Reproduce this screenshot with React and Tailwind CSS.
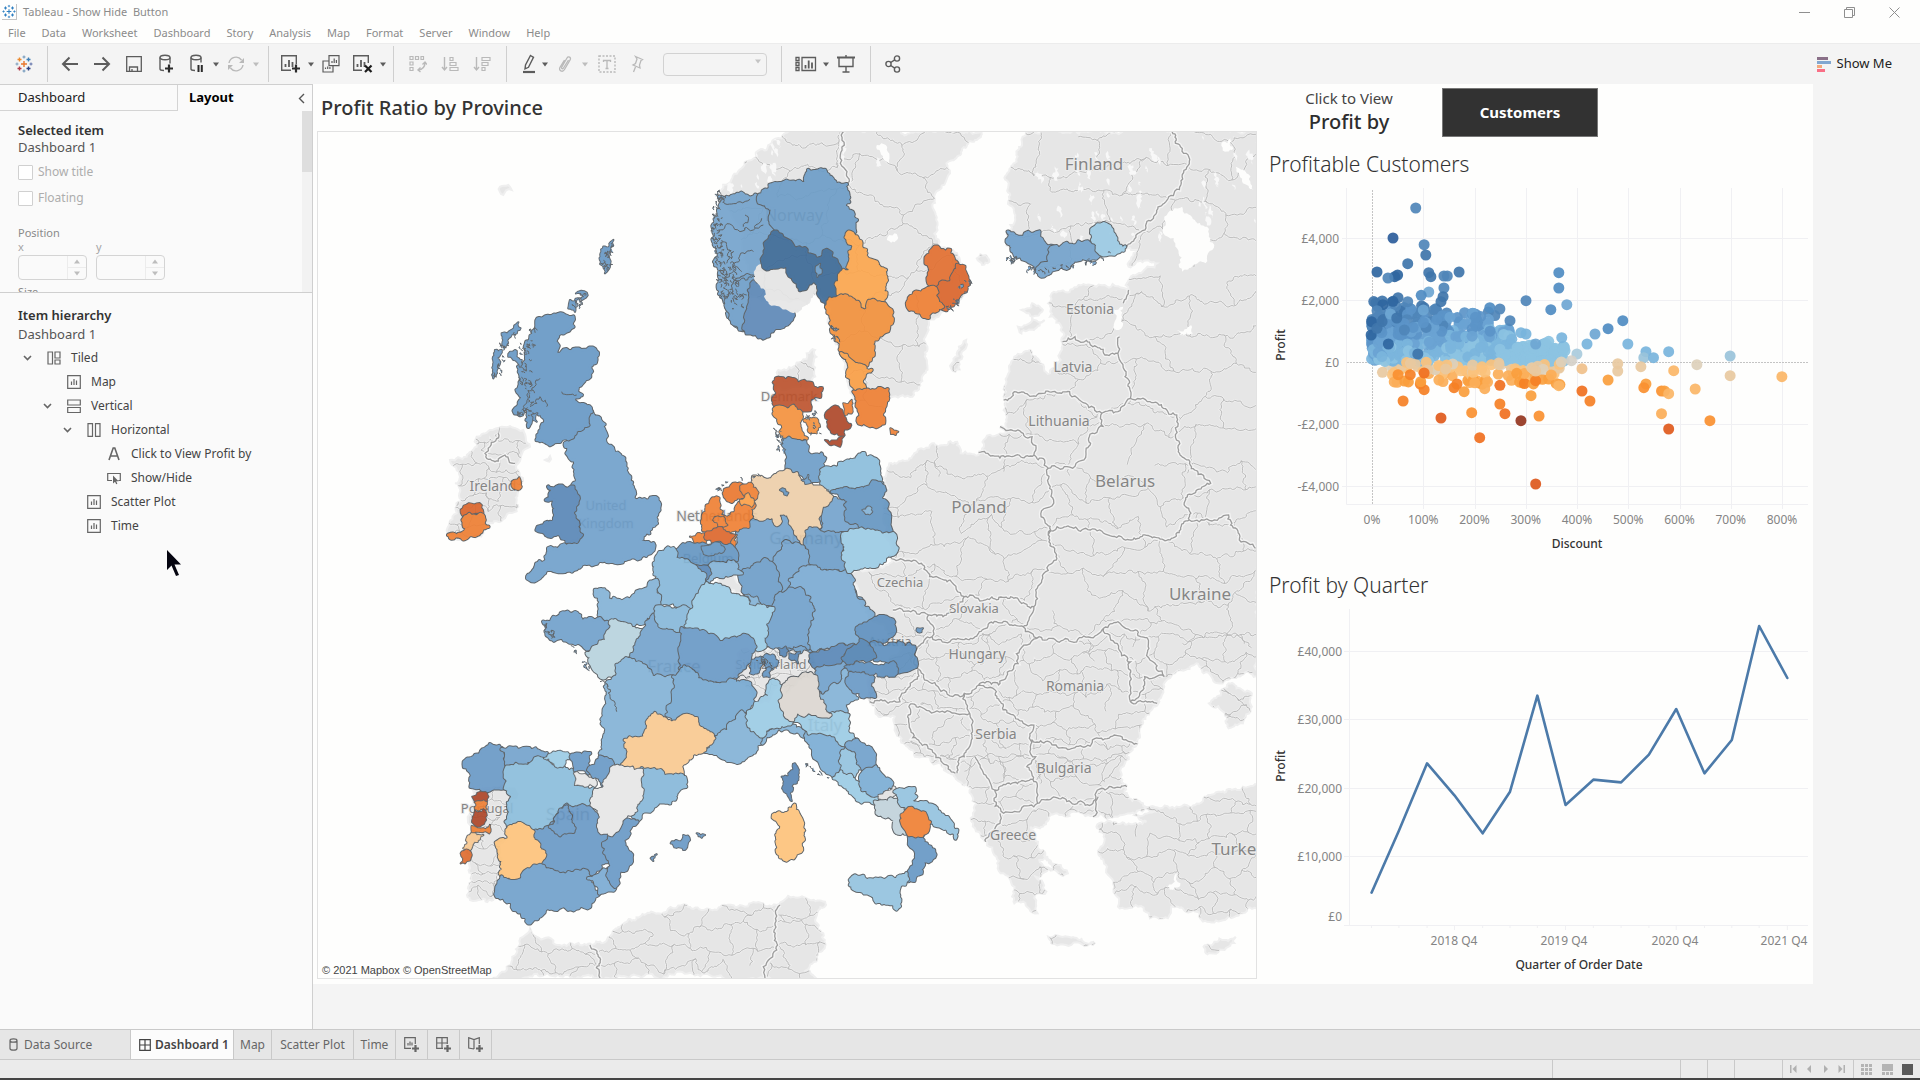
import React from "react";

/* ---------- geometry helpers ---------- */

const SHEETS = {
  nw: [440, 130, 3, 3],
  ne: [700, 130, 2.8, 3],
  sw: [440, 540, 3, 3],
  se: [700, 540, 2.8, 3],
  scatter: [1260, 80, 2.376, 3],
  line: [1260, 560, 2.376, 3],
};

const place = (sheet, x, y) => {
  const [ox, oy, sx, sy] = SHEETS[sheet];
  return [ox + x / sx, oy + y / sy];
};

const parse = (sheet, text) =>
  text
    .trim()
    .split(/\s+/)
    .map((pair) => {
      const [x, y] = pair.split(",").map(Number);
      return place(sheet, x, y);
    });

const hash = (x, y) => {
  const v = Math.sin(x * 12.9898 + y * 78.233) * 43758.5453;
  return v - Math.floor(v);
};

// Midpoint displacement; neighbours that share an edge get the same wiggle.
const wiggle = (a, b, rough, out) => {
  const dx = b[0] - a[0];
  const dy = b[1] - a[1];
  const len = Math.hypot(dx, dy);
  if (len < 3.2) {
    out.push(b);
    return;
  }
  const flip = a[0] > b[0] || (a[0] === b[0] && a[1] > b[1]) ? -1 : 1;
  const mx = (a[0] + b[0]) / 2;
  const my = (a[1] + b[1]) / 2;
  const amp = Math.min(len * rough, 3) * (hash(Math.round(mx * 10), Math.round(my * 10)) - 0.5) * 2 * flip;
  const m = [mx - (dy / len) * amp, my + (dx / len) * amp];
  wiggle(a, m, rough, out);
  wiggle(m, b, rough, out);
};

const trace = (points, closed, rough = 0.3) => {
  const out = [points[0]];
  for (let i = 1; i < points.length; i++) wiggle(points[i - 1], points[i], rough, out);
  if (closed) wiggle(points[points.length - 1], points[0], rough, out);
  return "M" + out.map((p) => p[0].toFixed(1) + " " + p[1].toFixed(1)).join("L") + (closed ? "Z" : "");
};

const random = (seed) => {
  let s = seed;
  return () => {
    s = (s * 1664525 + 1013904223) % 4294967296;
    return s / 4294967296;
  };
};

/* ---------- map data ---------- */

const LAND = [
  ["ne", "250,3 200,40 150,85 110,120 80,160 60,180 55,200 120,300 130,500 300,520 330,490 355,520 360,560 400,690 430,800 440,880 515,880 520,820 540,800 595,800 615,760 635,690 640,600 640,570 690,540 735,500 750,440 720,370 670,350 665,300 655,240 670,180 700,130 690,100 720,80 770,30 790,3"],
  ["ne", "920,3 890,60 860,130 865,200 880,250 870,300 860,330 890,380 950,420 1050,395 1190,355 1225,360 1200,410 1280,400 1200,450 1200,480 1080,465 985,490 975,520 980,560 1010,600 1015,640 1010,690 980,730 950,700 925,660 880,680 860,740 850,800 855,880 855,910 800,925 795,950 780,975 730,970 720,935 650,940 600,970 530,1000 515,1060 525,1230 540,1290 450,1320 410,1325 480,1470 560,1550 480,1640 470,1700 480,1720 500,1760 545,1760 560,1820 620,1880 700,1930 760,1975 775,2020 765,2080 800,2130 830,2180 850,2230 880,2280 880,2320 905,2315 945,2350 945,2290 970,2285 940,2240 990,2220 960,2160 925,2090 960,2090 980,2050 1050,2045 1110,2060 1170,2060 1280,2045 1240,2020 1200,2005 1180,1930 1200,1870 1225,1840 1235,1790 1270,1730 1300,1670 1330,1630 1390,1600 1410,1630 1450,1660 1540,1630 1565,1640 1565,3"],
  ["se", "1110,860 1130,850 1200,850 1250,845 1215,825 1260,800 1370,800 1450,755 1520,740 1565,740 1565,1100 1520,1120 1470,1140 1420,1145 1390,1115 1320,1100 1310,1135 1260,1135 1220,1095 1170,1100 1160,1040 1140,980 1115,940 1130,890"],
  ["se", "1425,490 1480,430 1545,460 1545,500 1520,550 1480,565 1470,520"],
  ["se", "975,1190 1030,1190 1105,1210 1100,1215 1040,1215 980,1200"],
  ["se", "1410,1220 1440,1205 1500,1190 1480,1220 1430,1240"],
  ["se", "950,960 1010,975 1030,1000 980,985"],
  ["sw", "155,1317 200,1280 235,1220 270,1165 290,1190 340,1210 440,1215 480,1205 540,1160 600,1130 680,1115 740,1095 830,1110 900,1095 1010,1095 1060,1070 1110,1080 1155,1085 1125,1140 1150,1180 1155,1220 1130,1250 1100,1290 1130,1317"],
  ["nw", "185,890 250,900 270,950 235,1000 245,1060 235,1130 195,1165 145,1180 130,1210 60,1230 20,1200 50,1150 65,1110 45,1060 60,1040 30,990 80,980 110,950 110,920 150,900"],
  ["nw", "1010,750 1015,720 1060,710 1100,670 1125,660 1120,700 1115,750 1110,770 1005,780"],
  ["sw", "95,745 215,745 230,770 205,800 205,850 195,900 175,910 180,1000 170,1040 160,1080 90,1080 95,1000 75,960 95,870"],
  ["sw", "900,335 1110,315 1135,400 1070,430 1040,460 1010,410 985,485 935,480 930,440 890,420"],
  ["sw", "835,125 860,95 885,100 910,150 890,165 840,140"],
  ["ne", "705,700 725,650 745,630 735,680 715,725"],
  ["ne", "900,540 930,520 960,540 930,560"],
  ["ne", "890,590 930,565 965,570 935,600 900,610"],
  ["ne", "775,385 800,375 810,395 790,405"],
  ["nw", "180,170 205,165 215,180 190,195"],
  ["nw", "315,990 330,978 328,995"],
];

const LAKES = [
  ["ne", "1300,260 1350,230 1420,290 1440,345 1415,400 1350,425 1340,370 1310,320"],
  ["ne", "1155,535 1185,530 1185,580 1165,600"],
  ["ne", "1335,600 1375,585 1380,610 1345,615"],
  ["ne", "1460,40 1485,25 1490,60 1470,65"],
  ["ne", "1500,110 1530,130 1550,180 1520,160"],
  ["ne", "523,330 545,310 552,330 535,338"],
  ["ne", "495,45 520,45 530,100 515,90"],
  ["se", "1310,1040 1335,1000 1345,1030 1325,1050"],
];

const FRONTIERS = [
  ["ne", "1305,3 1345,50 1370,95 1350,140 1300,220 1250,280 1190,350"],
  ["ne", "405,3 398,60 408,120 412,165"],
  ["ne", "1200,480 1185,520"],
  ["ne", "1175,620 1170,670"],
  ["ne", "1015,635 1050,620 1100,650 1130,670 1170,670 1190,740 1205,805"],
  ["ne", "850,810 880,785 960,790 1035,785 1080,820 1125,850 1170,845 1205,805"],
  ["ne", "1205,805 1260,815 1335,855 1340,960 1385,1020 1430,1060 1365,1095 1370,1170"],
  ["ne", "1370,1170 1320,1225 1180,1220 1080,1195 1000,1190 975,1215"],
  ["ne", "1370,1170 1480,1155 1510,1230 1555,1255"],
  ["ne", "1125,850 1130,890 1090,920 1075,990 1020,1010 975,1015"],
  ["ne", "780,967 860,978 935,975 965,990 975,1015 990,1110 955,1160 975,1215 998,1290 940,1380 935,1430"],
  ["ne", "840,890 890,900 930,920 935,975"],
  ["se", "530,45 620,70 640,100 700,120 740,170 800,180 870,170 935,200"],
  ["se", "540,210 640,225 700,210 740,170"],
  ["se", "640,225 650,290 700,305 770,290 830,245 905,260 935,200"],
  ["se", "650,290 610,320 605,385 690,455 740,460 780,435 850,420 895,330 950,290 905,260"],
  ["se", "950,290 1040,305 1130,265 1170,245 1220,270 1255,320 1260,360 1300,410 1245,410 1240,450 1205,485"],
  ["se", "1130,265 1195,350 1205,485 1280,490"],
  ["se", "780,435 830,455 865,520 905,550 935,555 925,600"],
  ["se", "925,600 1000,620 1080,620 1160,585 1225,612"],
  ["se", "740,460 755,520 700,515 585,500 590,570 650,630 715,700"],
  ["se", "755,520 760,600 725,660 720,700"],
  ["se", "925,600 940,650 915,680 935,725 945,790"],
  ["se", "770,650 825,750 860,730 935,725"],
  ["se", "825,750 825,800 850,820 945,790"],
  ["se", "945,790 1020,775 1100,790 1125,745 1195,740"],
  ["se", "1115,770 1100,830"],
  ["se", "840,820 840,850 800,905"],
  ["se", "475,485 560,485 600,420 610,390"],
  ["sw", "450,1215 475,1250 480,1315"],
  ["sw", "1020,1095 1005,1150 1010,1230 970,1280 975,1315"],
  ["nw", "175,910 150,950 135,970 165,995 195,975 225,1000"],
];

const REGIONS = [
  // Norway
  ["nw", "#7ea9cf", "838,200 870,203 958,195 965,220 1000,235 990,270 1010,305 975,340 970,405 940,440 950,460 935,510 915,600 865,560 860,520 845,500 840,420 830,350 825,280 835,240"],
  ["nw", "#77a3ca", "958,195 1005,160 1060,155 1095,160 1105,120 1155,120 1185,155 1220,163 1215,230 1250,270 1245,305 1222,310 1240,350 1235,410 1200,430 1160,360 1125,385 1095,360 1060,350 1010,305 990,270 1000,235 965,220"],
  ["nw", "#77a3ca", "860,520 880,480 905,445 940,440 955,460 930,520 915,600 870,565"],
  ["nw", "#6890bb", "940,455 975,475 985,520 1030,535 1060,550 1030,590 970,625 920,610 918,580 930,510"],
  ["nw", "#e6e6e6", "950,420 1000,400 1040,410 1055,440 1075,480 1110,460 1130,480 1100,520 1060,545 1030,535 990,520 975,475 948,450", "none"],
  ["nw", "#4b759e", "975,340 1010,305 1060,350 1095,355 1125,385 1140,385 1160,360 1195,405 1195,440 1195,520 1180,535 1140,500 1130,460 1105,460 1080,480 1060,440 1040,405 970,405"],
  ["nw", "#77a3ca", "1128,410 1140,402 1145,425 1132,440"],
  // Sweden
  ["ne", "#fbac5b", "412,310 430,315 465,380 520,420 520,500 512,520 470,520 462,550 430,510 390,500 390,435 420,420 430,350"],
  ["ne", "#f2994b", "358,515 390,500 430,510 462,550 470,520 512,520 535,560 520,605 485,630 480,680 450,705 395,670 380,630 365,580"],
  ["ne", "#f9a554", "395,670 450,705 480,720 460,740 465,780 440,785 415,720"],
  ["ne", "#ee8843", "430,785 465,780 500,775 525,778 520,820 515,880 470,885 445,880 440,820"],
  ["ne", "#e37a40", "632,400 665,350 700,360 720,400 705,430 670,470 640,460"],
  ["ne", "#dd713c", "720,405 740,410 748,440 730,490 690,540 665,520 668,470 705,450"],
  ["ne", "#ee8843", "580,520 605,485 660,475 665,520 680,530 640,563 605,545"],
  ["ne", "#ee8843", "533,895 555,905 548,915 535,912"],
  // Finland
  ["ne", "#7aa6ce", "862,305 890,320 950,305 960,335 990,350 975,400 940,415 900,380 880,370 862,340"],
  ["ne", "#7ea9cf", "990,350 1040,345 1060,335 1100,340 1120,355 1120,370 1040,400 950,435 945,415 975,400"],
  ["ne", "#a2cde4", "1100,295 1130,280 1150,295 1160,335 1190,350 1175,365 1115,365 1115,345 1098,330"],
  // Denmark
  ["nw", "#c0603e", "1002,757 1045,745 1115,760 1145,775 1140,800 1110,805 1110,840 1080,845 1060,828 1035,835 1005,835"],
  ["nw", "#f2994b", "1002,838 1035,835 1060,828 1085,860 1080,895 1100,925 1035,928 1025,880"],
  ["nw", "#f2994b", "1090,870 1130,865 1140,890 1130,910 1105,905"],
  ["nw", "#b35439", "1160,850 1185,830 1205,850 1215,870 1230,885 1210,895 1210,915 1170,895 1170,870"],
  ["nw", "#b35439", "1155,930 1210,920 1200,950 1165,940"],
  ["nw", "#ee8843", "1210,820 1235,810 1235,850 1215,855"],
  // Germany
  ["sw", "#7ea9cf", "900,-60 1000,-100 1150,-80 1220,0 1225,95 1235,140 1310,240 1250,280 1255,310 1120,330 970,320 1000,200 930,190 905,100 885,60"],
  ["nw", "#77a3ca", "1030,930 1095,935 1100,965 1155,985 1140,1050 1110,1060 1060,1025 1040,1015 1045,985"],
  ["ne", "#92c0dc", "340,1020 390,1000 460,970 500,1010 510,1060 490,1055 460,1080 410,1075 370,1085 340,1060"],
  ["ne", "#7ea9cf", "345,1110 380,1105 415,1110 410,1160 455,1190 460,1215 410,1225 405,1250 330,1230 350,1180"],
  ["ne", "#6f9cc5", "370,1085 410,1075 460,1080 490,1055 515,1070 510,1110 530,1150 530,1220 470,1235 455,1190 410,1170 415,1110"],
  ["ne", "#8bb6d8", "455,1140 470,1130 482,1145 465,1152"],
  ["nw", "#ecd0ae", "940,1040 1000,1040 1040,1020 1070,1030 1085,1060 1140,1070 1175,1100 1145,1130 1140,1190 1125,1220 1085,1240 1050,1180 1045,1150 1020,1150 1010,1185 985,1160 935,1160 930,1130 950,1080"],
  ["nw", "#6f9cc5", "1020,1080 1035,1078 1045,1088 1040,1096"],
  ["nw", "#77a3ca", "1085,1050 1105,1035 1112,1058"],
  ["sw", "#77a3ca", "1095,10 1110,-35 1210,-20 1215,60 1225,95 1190,85 1130,95 1110,80"],
  ["sw", "#7ea9cf", "1000,70 1030,10 1090,20 1110,80 1050,120 1050,160 1015,165"],
  ["sw", "#77a3ca", "905,100 980,60 995,70 1010,120 1015,190 1000,205 915,160"],
  ["sw", "#83afd4", "1105,320 1105,260 1120,210 1085,145 1050,160 1050,120 1110,80 1190,95 1225,95 1240,150 1310,240 1250,280 1255,310 1120,330"],
  ["sw", "#7aa6ce", "970,320 1000,200 1020,160 1080,145 1120,210 1105,260 1105,325"],
  ["sw", "#a2cde4", "1215,-20 1250,-30 1360,-20 1365,40 1300,80 1225,95 1215,60"],
  // Netherlands
  ["nw", "#ee8843", "815,1110 835,1105 840,1160 860,1170 890,1130 925,1100 940,1120 935,1160 925,1190 880,1200 840,1195 790,1200 790,1190"],
  ["nw", "#e9803f", "855,1080 880,1062 905,1065 910,1100 875,1115 855,1100"],
  ["nw", "#ee8843", "905,1065 935,1060 950,1080 945,1110 905,1085"],
  ["nw", "#f9a554", "900,1110 925,1090 942,1115 935,1130 905,1125"],
  ["nw", "#ee8843", "820,1170 850,1160 862,1185 835,1190"],
  ["nw", "#ee8843", "750,1220 790,1210 795,1250 760,1245"],
  ["nw", "#dd713c", "795,1210 850,1200 885,1215 880,1245 820,1240"],
  ["nw", "#ee8843", "875,1245 890,1215 890,1285 870,1285"],
  // Belgium
  ["sw", "#6f9cc5", "705,40 750,10 870,15 890,60 830,65 740,60 705,55"],
  ["sw", "#6f9cc5", "785,20 840,10 850,35 800,45"],
  ["sw", "#8bb6d8", "830,70 880,65 905,100 840,110 800,125 805,85"],
  ["sw", "#648fba", "740,70 800,80 810,100 790,125 790,95"],
  // France
  ["sw", "#8fbcda", "650,50 700,25 705,55 745,65 790,100 795,140 765,180 745,220 730,195 660,195 655,130"],
  ["sw", "#8bb6d8", "465,150 500,155 505,180 570,180 590,155 650,120 658,195 610,250 570,260 510,250 480,230 480,190"],
  ["sw", "#7aa6ce", "310,245 400,220 430,245 480,235 510,250 500,300 440,328 320,285"],
  ["sw", "#bcd4de", "510,250 570,255 608,275 600,310 570,355 530,375 530,410 490,415 455,375 440,340 480,305 500,300"],
  ["sw", "#7ea9cf", "608,275 640,225 670,265 725,275 725,390 700,410 635,410 605,375 570,355 590,310"],
  ["sw", "#8fbcda", "650,200 735,200 750,230 745,262 710,272 670,262 648,225"],
  ["sw", "#a2cde4", "765,180 800,130 840,135 880,165 930,190 1000,205 985,240 970,325 940,320 900,290 850,315 825,290 745,270 750,220"],
  ["sw", "#8bb6d8", "915,165 950,170 960,190 930,192"],
  ["sw", "#749fc8", "725,265 825,290 850,315 905,290 940,310 930,350 890,410 865,425 780,430 760,395 720,385"],
  ["sw", "#8bb6d8", "530,375 570,358 605,375 635,410 700,412 700,480 680,525 640,520 615,590 555,600 560,640 550,685 480,640 495,560 500,470 500,430 530,410"],
  ["sw", "#7fadd2", "700,410 725,388 760,395 785,430 865,425 890,425 930,430 945,490 900,520 865,560 860,580 790,570 770,535 710,545 680,525 700,480"],
  ["sw", "#8bb6d8", "860,575 870,550 905,515 935,525 935,570 970,590 965,610 905,660 850,655 795,635 820,600"],
  ["sw", "#f7cb98", "555,600 615,590 645,520 680,545 710,545 740,525 770,535 790,570 822,595 795,630 755,645 730,670 730,712 700,712 605,685 550,688 565,640"],
  ["sw", "#648fba", "1025,710 1060,690 1065,670 1072,680 1075,720 1055,783 1030,750"],
  // Spain
  ["sw", "#749fc8", "72,665 120,645 150,613 185,625 200,680 195,745 150,750 92,740 85,690"],
  ["sw", "#7ea9cf", "185,628 250,625 320,640 310,655 200,678"],
  ["sw", "#92c0dc", "200,680 310,658 355,680 395,690 402,735 460,745 455,800 405,795 340,835 325,865 280,875 235,850 205,860 205,800 230,770 195,745"],
  ["sw", "#a2cde4", "312,655 340,635 395,645 360,680"],
  ["sw", "#749fc8", "395,645 450,640 445,700 405,690"],
  ["sw", "#e6e6e6", "402,700 465,710 465,740 405,735"],
  ["sw", "#749fc8", "445,690 480,650 522,680 495,740 460,710"],
  ["sw", "#8fbcda", "605,685 700,712 735,712 738,740 690,790 640,800 595,840 580,830 585,780 600,740"],
  ["sw", "#749fc8", "280,875 330,860 380,795 455,800 480,830 480,855 515,885 495,910 510,960 440,1000 435,990 340,995 300,975 310,935 290,900"],
  ["sw", "#749fc8", "330,860 380,800 400,875 360,885"],
  ["sw", "#fbc684", "168,908 195,905 200,870 235,850 280,875 290,905 312,935 300,970 270,990 240,1020 180,1000 190,960"],
  ["sw", "#7aa6ce", "170,1040 185,1010 240,1020 270,990 300,975 340,995 430,990 445,1020 478,1060 450,1100 335,1105 265,1150 230,1110 215,1085 170,1070"],
  ["sw", "#83afd4", "445,1015 510,985 500,1000 525,1045 478,1060"],
  ["sw", "#749fc8", "515,885 555,835 592,845 552,920 575,965 540,990 525,1040 505,1000 510,960 490,910"],
  ["sw", "#e6e6e6", "495,740 522,680 605,690 600,740 580,820 550,835 515,885 475,860 480,820 455,795 465,750"],
  ["sw", "#749fc8", "692,910 730,885 750,900 730,930"],
  ["sw", "#749fc8", "770,880 795,885 785,893"],
  ["sw", "#749fc8", "632,955 650,943 640,963"],
  // Portugal
  ["sw", "#b35439", "97,770 130,757 145,770 140,785 105,785"],
  ["sw", "#ee8843", "105,787 140,787 140,808 105,808"],
  ["sw", "#b35439", "105,812 130,808 125,855 100,850"],
  ["sw", "#ee8843", "95,858 130,865 150,855 148,880 95,880"],
  ["sw", "#f7cb98", "90,885 130,885 80,930 70,925"],
  ["sw", "#e0763f", "62,940 85,930 95,945 75,970 62,970"],
  // Great Britain
  ["nw", "#7aa6ce", "455,845 480,870 495,935 540,975 570,1040 585,1110 640,1102 658,1140 650,1180 600,1235 640,1240 635,1265 600,1285 500,1295 450,1300 375,1325 320,1320 290,1350 262,1345 320,1290 325,1255 380,1250 410,1235 425,1215 405,1140 415,1100 400,1070 405,990 380,970 375,940 400,920 445,885"],
  ["nw", "#719ec7", "298,565 400,560 400,590 350,640 345,670 400,658 465,658 468,680 450,740 410,785 425,795 400,815 440,830 455,845 445,885 400,915 360,935 330,945 290,930 315,880 305,850 280,840 265,890 260,870 270,830 240,855 225,850 250,800 230,780 255,750 240,730 235,710 260,690 255,650 285,600"],
  ["nw", "#648fba", "325,1070 345,1075 400,1070 415,1100 405,1140 410,1190 425,1215 410,1235 380,1235 340,1215 290,1200 345,1160 345,1110 318,1110 335,1085"],
  ["nw", "#719ec7", "520,330 510,360 500,425 495,430 480,390 490,350"],
  ["nw", "#719ec7", "390,510 415,505 405,545 385,535"],
  ["nw", "#719ec7", "185,610 235,577 230,610 195,650 190,630"],
  ["nw", "#719ec7", "165,660 185,660 175,710 160,745"],
  ["nw", "#719ec7", "205,680 225,660 245,690 240,710"],
  ["nw", "#719ec7", "275,855 292,850 290,875 280,870"],
  ["nw", "#719ec7", "408,490 430,500 425,510 440,488"],
  // Ireland
  ["nw", "#dd713c", "68,1135 125,1125 128,1155 70,1160"],
  ["nw", "#ee8843", "75,1160 128,1155 145,1190 70,1228 40,1225 25,1215 75,1205"],
  ["nw", "#ee8843", "222,1050 238,1042 240,1078 220,1075"],
  // Italy
  ["se", "#8bb6d8", "180,585 240,550 300,575 300,595 240,565 200,580 175,610"],
  ["se", "#a2cde4", "205,420 230,450 225,500 260,540 240,555 180,585 145,570 135,515 155,490 195,470 190,445"],
  ["se", "#7aa6ce", "325,380 400,365 420,390 400,405 390,435 350,465 330,450"],
  ["se", "#8bb6d8", "330,465 350,465 390,435 400,395 425,395 415,440 440,475 405,490 415,525 365,522 330,490"],
  ["se", "#749fc8", "420,400 480,405 475,440 490,470 430,455 415,435"],
  ["se", "#83b1d5", "300,575 370,585 405,615 400,650 395,695 375,712 340,680 310,620"],
  ["se", "#a2cde4", "260,540 275,515 415,525 412,570 440,600 405,615 365,580 305,580"],
  ["se", "#dcd8d2", "230,450 255,415 310,400 325,410 330,460 365,525 275,515 260,540 228,500 235,470"],
  ["se", "#9ac6e0", "410,625 440,650 450,685 420,710 395,695"],
  ["se", "#7aa6ce", "440,600 478,625 492,680 455,685 440,650 410,615"],
  ["se", "#a2cde4", "395,695 425,710 455,730 460,760 495,765 488,790 440,780 375,715"],
  ["se", "#83b1d5", "455,700 492,680 535,740 500,765 455,750"],
  ["se", "#e2e2e2", "500,765 540,740 550,755 535,780 500,775"],
  ["se", "#c3d3db", "490,785 550,780 575,830 580,880 545,870 545,840 495,820"],
  ["se", "#9ac6e0", "545,755 600,745 605,770 590,775 680,825 720,870 715,895 690,865 640,850 605,815 560,790"],
  ["se", "#719ec7", "585,887 625,880 625,910 655,930 650,955 625,965 620,1000 600,1022 578,1022 600,970 605,950"],
  ["se", "#ee8843", "565,825 585,805 635,835 640,860 610,885 585,885"],
  ["se", "#9ac6e0", "420,1020 440,1010 500,1018 578,1000 555,1060 560,1085 550,1108 510,1090 460,1060 420,1035"],
  ["se", "#fbc684", "205,825 240,820 265,795 288,850 282,935 235,958 218,940 225,870"],
  // Austria and Switzerland
  ["se", "#648fba", "310,345 370,325 430,315 400,350 375,370 320,380"],
  ["se", "#6a97c1", "440,280 490,235 540,240 545,265 530,290 500,305 460,310"],
  ["se", "#6a97c1", "480,310 600,320 605,380 550,395 545,370 490,360"],
  ["se", "#5f8bb6", "400,355 440,320 450,300 490,350 470,365 420,370"],
  ["se", "#6a97c1", "405,380 440,365 548,370 548,405 510,410 430,395"],
  ["se", "#719ec7", "608,265 624,265 620,276 610,276"],
  ["se", "#719ec7", "145,360 170,350 180,370 160,400 140,400"],
  ["se", "#719ec7", "175,352 210,350 215,378 185,385"],
  ["se", "#719ec7", "180,395 200,385 195,412 178,410"],
  ["se", "#648fba", "220,325 240,320 242,345 225,345"],
  ["se", "#648fba", "250,340 280,335 275,370 250,355"],
];

const INLETS = [
  ["nw", "835,300 880,290 940,300 970,285"],
  ["nw", "845,440 880,410 900,375 940,365"],
  ["nw", "850,215 900,215 930,208"],
  ["nw", "845,330 870,360 860,400"],
  ["nw", "910,290 925,270 915,255"],
  ["nw", "945,295 965,265"],
  ["nw", "870,400 905,425"],
  ["nw", "890,470 905,445 945,440"],
  ["nw", "880,500 920,495"],
  ["nw", "365,785 410,795"],
  ["nw", "245,840 275,780 300,745"],
  ["nw", "270,830 300,800 320,830"],
  ["sw", "500,430 510,470 530,515"],
  ["sw", "480,425 505,440"],
  ["sw", "890,425 910,405 930,410"],
];

const SKERRIES = [
  ["nw", "840,185 832,240 825,300 832,360 842,430 850,500", 70, 16],
  ["nw", "850,350 860,420 880,480 890,530", 50, 22],
  ["nw", "255,640 260,700 245,750 270,800 240,860", 46, 20],
  ["nw", "280,590 265,650", 12, 12],
  ["nw", "515,335 495,380 498,420", 18, 14],
  ["nw", "430,490 400,530", 12, 12],
  ["nw", "235,590 190,640 175,700 165,740", 16, 10],
  ["ne", "862,375 890,395 940,425 1040,405 1160,370", 34, 12],
  ["ne", "745,440 720,510 690,530", 18, 14],
  ["nw", "1012,900 1022,960", 16, 10],
  ["nw", "820,1085 860,1055 960,1035", 10, 4],
  ["nw", "1110,830 1125,910", 10, 16],
  ["nw", "1180,580 1190,640", 12, 10],
  ["sw", "315,250 330,290", 12, 12],
  ["sw", "385,315 460,400", 8, 6],
  ["sw", "1090,665 1160,715", 8, 14],
  ["se", "150,350 210,380", 14, 16],
];

const LABELS = [
  ["Finland", 1094, 170, 17], ["Estonia", 1090, 314, 14], ["Latvia", 1073, 372, 14],
  ["Lithuania", 1059, 426, 14], ["Belarus", 1125, 487, 17], ["Poland", 979, 513, 17],
  ["Ukraine", 1200, 600, 17], ["Czechia", 900, 587, 13], ["Slovakia", 974, 613, 13],
  ["Hungary", 977, 659, 14], ["Romania", 1075, 691, 14], ["Serbia", 996, 739, 14],
  ["Bulgaria", 1064, 773, 14], ["Greece", 1013, 840, 14], ["Turkey", 1238, 855, 17],
  ["Ireland", 493, 491, 14], ["Norway", 794, 221, 16], ["Denmark", 789, 401, 13],
  ["Netherlands", 717, 521, 14], ["Germany", 806, 544, 17], ["Belgium", 708, 563, 13],
  ["France", 674, 672, 17], ["Switzerland", 771, 669, 13], ["Austria", 890, 646, 13],
  ["Italy", 825, 731, 17], ["Spain", 568, 820, 17], ["Portugal", 487, 813, 13],
  ["United", 606, 510, 13], ["Kingdom", 606, 528, 13],
];

const meshPath = (x0, y0, x1, y1, step) => {
  const node = (i, j) => [
    x0 + i * step + (hash(i + x0, j * 3 + 1) - 0.5) * step * 0.9,
    y0 + j * step + (hash(i * 5 + 2, j + y0) - 0.5) * step * 0.9,
  ];
  let d = "";
  for (let i = 0; x0 + i * step < x1; i++) {
    for (let j = 0; y0 + j * step < y1; j++) {
      if (hash(i * 7 + 3, j * 11) > 0.06) d += trace([node(i, j), node(i + 1, j)], false, 0.28);
      if ((i + j) % 2 === 0) d += trace([node(i, j), node(i, j + 1)], false, 0.28);
    }
  }
  return d;
};

const MESH = [
  meshPath(690, 132, 1256, 470, 34),
  meshPath(880, 470, 1256, 640, 26),
  meshPath(850, 640, 1256, 760, 17),
  meshPath(850, 760, 1256, 960, 19),
  meshPath(460, 890, 850, 980, 19),
  meshPath(445, 425, 525, 545, 14),
  meshPath(465, 785, 520, 905, 15),
  meshPath(740, 640, 830, 700, 12),
].join("");

const landPath = LAND.map(([s, t]) => trace(parse(s, t), true)).join("");
const lakePath = LAKES.map(([s, t]) => trace(parse(s, t), true)).join("");
const frontierPath = FRONTIERS.map(([s, t]) => trace(parse(s, t), false)).join("");
const inletPath = INLETS.map(([s, t]) => trace(parse(s, t), false, 0.4)).join("");

const skerryPath = (() => {
  const rnd = random(41);
  let d = "";
  SKERRIES.forEach(([s, t, count, spread]) => {
    const pts = parse(s, t);
    for (let k = 0; k < count; k++) {
      const f = rnd() * (pts.length - 1);
      const i = Math.floor(f);
      const u = f - i;
      const x = pts[i][0] + (pts[i + 1][0] - pts[i][0]) * u + (rnd() - 0.5) * (spread / 1.6);
      const y = pts[i][1] + (pts[i + 1][1] - pts[i][1]) * u + (rnd() - 0.5) * (spread / 2.5);
      d += trace([[x, y], [x + (rnd() - 0.3) * 5, y + (rnd() - 0.5) * 4], [x + rnd() * 3, y + rnd() * 4]], false, 0.4);
    }
  });
  return d;
})();

const pondPath = (() => {
  const rnd = random(7);
  let d = "";
  const add = (x0, y0, w, h, n) => {
    for (let k = 0; k < n; k++) {
      const x = x0 + rnd() * w;
      const y = y0 + rnd() * h;
      const r = 1 + rnd() * 2.5;
      d += trace([[x, y], [x + r * 0.5, y - r * 2], [x + r * 1.6, y], [x + r * 1.4, y + r * 2.4]], true, 0.5);
    }
  };
  add(1030, 150, 130, 90, 40);
  add(1190, 135, 65, 90, 12);
  add(800, 140, 90, 60, 4);
  add(715, 140, 60, 50, 26);
  return d;
})();

// Fill opacity of the data layer is 0.9; this keeps the blended tone on target.
const deepen = (hex) => {
  const ch = [1, 3, 5].map((i) => {
    const v = (parseInt(hex.slice(i, i + 2), 16) - 23) / 0.9;
    return Math.max(0, Math.min(255, Math.round(v)));
  });
  return `rgb(${ch.join(",")})`;
};

const AREAS = REGIONS.map(([sheet, fill, text, stroke]) => {
  const pts = parse(sheet, text);
  const xs = pts.map((p) => p[0]);
  const ys = pts.map((p) => p[1]);
  const size = Math.min(Math.max(...xs) - Math.min(...xs), Math.max(...ys) - Math.min(...ys));
  return { d: trace(pts, true), fill: deepen(fill), bare: stroke === "none", wide: size > 17 };
});

const OUTLINE = "#50565b";

function ProfitMap() {
  return (
    <svg viewBox="318 132 938 846" className="block h-auto w-full" role="img" aria-label="Profit ratio by province">
      <defs>
        <clipPath id="land-clip">
          <path d={landPath} />
        </clipPath>
      </defs>
      <path d={landPath} fill="#e6e6e6" stroke="#efefef" strokeWidth="2" />
      <g clipPath="url(#land-clip)">
        <path d={MESH} fill="none" stroke="#efefef" strokeWidth="2.4" />
        <path d={MESH} fill="none" stroke="#b6b6b6" strokeWidth="0.9" />
        <path d={pondPath} fill="#f8f8f8" />
        <path d={lakePath} fill="#fdfdfc" />
      </g>
      <path d={frontierPath} fill="none" stroke="#f4f4f4" strokeWidth="4" />
      <path d={frontierPath} fill="none" stroke="#9c9c9c" strokeWidth="1.3" />
      <g fill="#858585" stroke="#ececec" strokeWidth="2" paintOrder="stroke" textAnchor="middle">
        {LABELS.map(([name, x, y, size]) => (
          <text key={name} x={x} y={y} fontSize={size}>{name}</text>
        ))}
      </g>
      <g opacity="0.9" strokeLinejoin="round">
        {AREAS.map((a, i) => (
          <g key={i}>
            {a.bare ? null : <path d={a.d} fill="none" stroke={OUTLINE} strokeWidth={a.wide ? 4.6 : 2.2} />}
            <path d={a.d} fill={a.fill} stroke={a.fill} strokeWidth={a.wide ? 2.6 : 0.4} />
          </g>
        ))}
        <path d={inletPath} fill="none" stroke={OUTLINE} strokeWidth="1" />
        <path d={skerryPath} fill="#719ec7" stroke={OUTLINE} strokeWidth="1" />
      </g>
      <text x="322" y="974" fontSize="11" fill="#444" className="font-['Liberation_Sans',sans-serif]">
        © 2021 Mapbox © OpenStreetMap
      </text>
    </svg>
  );
}

/* ---------- scatter plot ---------- */

const MARKS = [
  ["#4f86b9", "370,384"], ["#2c5d9b", "316,474"], ["#4f86b9", "390,494"], ["#3f75aa", "394,525"],
  ["#3f75aa", "351,551"], ["#2f66a0", "278,576"], ["#2f66a0", "327,585"], ["#2f66a0", "320,590"],
  ["#4f86b9", "304,594"], ["#3f75aa", "401,578"], ["#3f75aa", "406,590"], ["#4f86b9", "437,588"],
  ["#4f86b9", "445,588"], ["#3f75aa", "473,576"], ["#4f8cc2", "710,578"], ["#4f8cc2", "710,624"],
  ["#4f86b9", "437,624"], ["#6ea6d3", "401,636"], ["#3f75aa", "328,653"], ["#2f66a0", "316,664"],
  ["#4f8cc2", "383,646"], ["#3f75aa", "435,650"], ["#3f75aa", "430,665"], ["#4f86b9", "351,665"],
  ["#4f86b9", "632,662"], ["#6ea6d3", "729,674"], ["#4f8cc2", "691,689"], ["#4f8cc2", "546,683"],
  ["#4f86b9", "570,687"], ["#4f86b9", "594,722"], ["#4f8cc2", "862,722"], ["#4f8cc2", "827,746"],
  ["#6ea6d3", "796,762"], ["#78b4dc", "717,773"], ["#78b4dc", "777,792"], ["#6ea6d3", "655,792"],
  ["#78b4dc", "874,792"], ["#78b4dc", "632,762"], ["#78b4dc", "620,758"], ["#8cc3e2", "686,784"],
  ["#78b4dc", "917,815"], ["#78b4dc", "971,815"], ["#9ac3da", "912,833"], ["#78b4dc", "935,833"],
  ["#9ac3da", "1117,828"], ["#a9cbdc", "753,822"], ["#8cc3e2", "720,808"], ["#2f66a0", "265,725"],
  ["#2f66a0", "264,765"], ["#3f75aa", "280,677"], ["#2f66a0", "292,674"], ["#4f86b9", "278,692"],
  ["#3f75aa", "290,725"], ["#3f75aa", "278,745"], ["#2f66a0", "305,792"], ["#3f75aa", "375,822"],
  ["#4f86b9", "343,750"], ["#6ea6d3", "310,702"], ["#3f75aa", "325,714"], ["#6ea6d3", "388,690"],
  ["#e8c9a0", "850,873"], ["#e8c9a0", "850,851"], ["#e8c9a0", "905,860"],
  ["#ddd0bb", "1038,854"], ["#e8c9a0", "1117,887"], ["#fbb667", "983,872"], ["#fbb667", "1240,890"],
  ["#f0c08a", "765,866"], ["#fa9e3d", "827,900"], ["#fa9e3d", "917,912"], ["#fa9030", "912,923"],
  ["#fa9030", "954,933"], ["#fa9e3d", "961,933"], ["#fbb667", "971,941"], ["#fbb667", "1034,927"],
  ["#f07020", "765,933"], ["#f58025", "784,963"], ["#fbb667", "710,917"], ["#fbae58", "954,1001"],
  ["#fa9030", "1069,1022"], ["#df5a1c", "971,1047"], ["#f58025", "340,963"], ["#df5a1c", "430,1014"],
  ["#fa9030", "503,998"], ["#f58025", "570,972"], ["#f07020", "582,1001"], ["#fa9030", "663,1008"],
  ["#953620", "620,1022"], ["#f07020", "522,1073"], ["#dd581c", "655,1212"], ["#fa9e3d", "644,947"],
  ["#f58025", "390,929"], ["#fbae58", "534,926"], ["#fa9e3d", "485,935"], ["#f58025", "461,923"],
  ["#f58025", "468,912"], ["#f07020", "570,916"], ["#fbae58", "425,900"], ["#fa9e3d", "382,905"],
  ["#f58025", "655,902"], ["#fbae58", "692,885"], ["#d5d0c8", "740,842"], ["#ddd0bb", "716,846"],
  ["#e8c9a0", "291,877"], ["#fa9030", "328,884"], ["#f58025", "357,884"], ["#f07020", "390,879"],
  ["#e8c9a0", "655,873"], ["#fbae58", "590,887"], ["#fa9e3d", "610,880"],
];

const CLOUD = (() => {
  const rnd = random(20);
  const blues = ["#8cc3e2", "#7bb5dc", "#6aa3d2", "#5b94c8", "#4f86b9", "#3f75aa"];
  const oranges = ["#ddd0bb", "#e8c9a0", "#fbc27c", "#fbae58", "#fa9e3d", "#f58025"];
  const out = [];
  for (let k = 0; k < 90; k++) {
    const x = 300 + 420 * Math.pow(rnd(), 1.1);
    const drop = 62 * Math.pow(rnd(), 1.7);
    out.push([x, 852 + drop, oranges[Math.min(5, Math.floor(drop / 16 + rnd() * 2))]]);
  }
  for (let k = 0; k < 620; k++) {
    const x = 265 + 460 * Math.pow(rnd(), 1.3);
    const top = (x < 450 ? 190 : x < 560 ? 155 : x < 600 ? 110 : 58) * (0.7 + 0.3 * rnd());
    const rise = top * Math.pow(rnd(), 1.2);
    const tone = rise / 40 + (x < 300 ? 1.2 : x < 450 ? 0.7 : 0) - (x > 560 ? 0.8 : 0) + (rnd() - 0.5) * 1.8;
    out.push([x, 845 - rise, blues[Math.max(0, Math.min(5, Math.floor(tone)))]]);
  }
  for (let k = 0; k < 26; k++) {
    out.push([330 + 390 * rnd(), 846 + rnd() * 26, oranges[Math.floor(rnd() * 3)]]);
  }
  return out;
})();

const X_TICKS = ["0%", "100%", "200%", "300%", "400%", "500%", "600%", "700%", "800%"];

function ScatterPlot() {
  const tickX = (i) => 1372 + i * 51.25;
  return (
    <svg viewBox="1259 182 554 385" className="block h-auto w-full" role="img" aria-label="Profit against discount by customer">
      <g stroke="#f0f0f3" strokeWidth="1">
        <path d="M1346.5 188V504.5H1808" fill="none" />
        {X_TICKS.map((t, i) => (i ? <path key={t} d={`M${Math.round(tickX(i)) + 0.5} 188V509`} /> : null))}
        {[238.5, 300.5, 424.5, 486.5].map((y) => <path key={y} d={`M1342 ${y}H1808`} />)}
      </g>
      <g stroke="#c4c4c4" strokeWidth="1" strokeDasharray="2 1">
        <path d="M1372.5 190V504" />
        <path d="M1347 362.5H1808" />
      </g>
      <g fillOpacity="0.92">
        {CLOUD.map(([x, y, c], i) => {
          const p = place("scatter", x, y);
          return <circle key={i} cx={p[0]} cy={p[1]} r="5.5" fill={c} />;
        })}
        {MARKS.map(([c, t], i) => {
          const p = parse("scatter", t)[0];
          return <circle key={i} cx={p[0]} cy={p[1]} r="5.5" fill={c} />;
        })}
      </g>
      <g fill="#848484" fontSize="12" textAnchor="middle">
        {X_TICKS.map((t, i) => <text key={t} x={tickX(i)} y="524">{t}</text>)}
      </g>
      <g fill="#848484" fontSize="12" textAnchor="end">
        {[["£4,000", 243], ["£2,000", 305], ["£0", 367], ["-£2,000", 429], ["-£4,000", 491]].map(([t, y]) => (
          <text key={t} x="1339" y={y}>{t}</text>
        ))}
      </g>
      <text x="1577" y="548" fontSize="12" fill="#333" fontWeight="500" textAnchor="middle">Discount</text>
      <text transform="translate(1285 345) rotate(-90)" fontSize="12" fill="#333" fontWeight="500" textAnchor="middle">Profit</text>
    </svg>
  );
}

/* ---------- quarterly line ---------- */

const QUARTERS = parse(
  "line",
  "265,998 330,812 397,610 462,706 529,820 594,695 659,407 726,735 792,659 858,667 924,584 989,447 1056,640 1121,540 1186,198 1253,354"
);

function LineChart() {
  return (
    <svg viewBox="1259 603 554 381" className="block h-auto w-full" role="img" aria-label="Profit by quarter">
      <g stroke="#f0f0f3" strokeWidth="1">
        <path d="M1349.5 609V925.5" />
        <path d="M1344 925.5H1808" />
        {[651.5, 719.5, 788.5, 856.5].map((y) => <path key={y} d={`M1344 ${y}H1808`} />)}
        {QUARTERS.map(([x], i) => <path key={i} d={`M${x} 925V${i % 4 === 3 ? 930 : 928}`} />)}
      </g>
      <polyline
        points={QUARTERS.map((p) => p.join(",")).join(" ")}
        fill="none" stroke="#4c7aa9" strokeWidth="2.6" strokeLinejoin="round" strokeLinecap="round"
      />
      <g fill="#848484" fontSize="12" textAnchor="end">
        {[["£40,000", 656], ["£30,000", 724], ["£20,000", 793], ["£10,000", 861], ["£0", 921]].map(([t, y]) => (
          <text key={t} x="1342" y={y}>{t}</text>
        ))}
      </g>
      <g fill="#848484" fontSize="12" textAnchor="middle">
        {[["2018 Q4", 1454], ["2019 Q4", 1564], ["2020 Q4", 1675], ["2021 Q4", 1784]].map(([t, x]) => (
          <text key={t} x={x} y="945">{t}</text>
        ))}
      </g>
      <text x="1579" y="969" fontSize="12" fill="#333" fontWeight="500" textAnchor="middle">Quarter of Order Date</text>
      <text transform="translate(1285 766) rotate(-90)" fontSize="12" fill="#333" fontWeight="500" textAnchor="middle">Profit</text>
    </svg>
  );
}

/* ---------- icons ---------- */

const I = ({ w = 20, h = 20, children, className = "" }) => (
  <svg width={w} height={h} viewBox={`0 0 ${w} ${h}`} fill="none" stroke="currentColor" strokeWidth="1.4" aria-hidden="true" className={"shrink-0 " + className}>
    {children}
  </svg>
);

const plus = (x, y, r) => `M${x - r} ${y}h${2 * r}M${x} ${y - r}v${2 * r}`;

const TableauMark = ({ mono }) => {
  const c = mono ? Array(9).fill("#2f7fc1") : ["#e8762c", "#eb8a2f", "#3f7fb5", "#b03a4a", "#2b3f80", "#6b93b8", "#5d6fa8", "#6b93b8", "#7b9cbc"];
  return (
    <I w={18} h={18}>
      <path d={plus(9, 9, 3)} stroke={c[0]} />
      <path d={plus(4.5, 4.5, 2)} stroke={c[1]} />
      <path d={plus(13.5, 4.5, 2)} stroke={c[2]} />
      <path d={plus(4.5, 13.5, 2)} stroke={c[3]} />
      <path d={plus(13.5, 13.5, 2)} stroke={c[4]} />
      <path d={plus(9, 2, 1.5)} stroke={c[5]} strokeWidth="1" />
      <path d={plus(16, 9, 1.5)} stroke={c[6]} strokeWidth="1" />
      <path d={plus(9, 16, 1.5)} stroke={c[7]} strokeWidth="1" />
      <path d={plus(2, 9, 1.5)} stroke={c[8]} strokeWidth="1" />
    </I>
  );
};

const Caret = () => (
  <svg width="6" height="5" viewBox="0 0 6 5" fill="currentColor" aria-hidden="true"><path d="M0 0.5H6L3 4.5Z" /></svg>
);

const Chevron = () => (
  <I w={9} h={6} className="text-[#666]"><path d="M1 1l3.5 3.5L8 1" strokeWidth="1.6" /></I>
);

const SheetIcon = () => (
  <I w={14} h={14}><path d="M.7.7h12.6v12.6H.7zM4.5 10V6.5M7 10V4M9.5 10V5.5" strokeWidth="1.2" /></I>
);

const HIER = {
  tiled: <I w={14} h={14}><path d="M1 1h4.5v12H1zM8 1h5v6H8zM8 9h5v4H8z" strokeWidth="1.2" /></I>,
  sheet: <SheetIcon />,
  vertical: <I w={14} h={14}><path d="M.7 1h12.6v5H.7zM.7 8.5h12.6v5H.7z" strokeWidth="1.2" /></I>,
  horizontal: <I w={14} h={14}><path d="M1 .7h4.5v12.6H1zM8.5 .7h4.5v12.6H8.5z" strokeWidth="1.2" /></I>,
  text: <I w={14} h={14}><path d="M2 13L6.2 1h1.6L12 13M3.6 9h6.8" strokeWidth="1.6" /></I>,
  button: (
    <I w={14} h={14}>
      <path d="M5 9.5H.7V2.5h12.6v7h-2" strokeWidth="1.2" />
      <path d="M6 4.5v8l2-1.8 1.2 2.6 1.2-.6-1.2-2.4h2.4z" fill="currentColor" stroke="none" />
    </I>
  ),
};

const BarsIn = () => <path d="M4.5 12v-3M8 12v-7M11.5 12v-5" strokeWidth="1.8" />;

const TOOL = {
  back: <I w={18} h={16}><path d="M17 8H2M8.5 1.5L2 8l6.5 6.5" strokeWidth="2" /></I>,
  forward: <I w={18} h={16}><path d="M1 8h15M9.500 1.5L16 8l-6.500 6.500" strokeWidth="2" /></I>,
  save: <I w={16} h={16}><path d="M.7.7h14.600v14.600H.7zM3.500 15v-4h8v4M6 15v-2" strokeWidth="1.3" /></I>,
  addData: (
    <I w={16} h={20}>
      <path d="M2 3.500v11.500c0 1 2 1.500 4 1.500M12 3.500v6" />
      <ellipse cx="7" cy="3.500" rx="5" ry="2.300" />
      <path d={plus(11, 14.500, 4)} stroke="#2b2b2b" strokeWidth="2.200" />
    </I>
  ),
  pauseData: (
    <I w={14} h={20}>
      <path d="M2 3.500v11.500c0 1 2 1.500 4 1.500M12 3.500v5" />
      <ellipse cx="7" cy="3.500" rx="5" ry="2.300" />
      <path d="M9.500 11v7M12.800 11v7" stroke="#2b2b2b" strokeWidth="2" />
    </I>
  ),
  refresh: (
    <I w={18} h={18}>
      <path d="M2 8a7 7 0 0 1 12.500-3M16 10a7 7 0 0 1-12.500 3" />
      <path d="M17 3v5h-5zM1 15v-5h5z" fill="currentColor" stroke="none" />
    </I>
  ),
  newSheet: (
    <I w={20} h={18}>
      <path d="M10 15.300H.7V.7h14.600V9" /><BarsIn />
      <path d={plus(15, 13.500, 4)} stroke="#2b2b2b" strokeWidth="2.200" />
    </I>
  ),
  duplicate: (
    <I w={18} h={18}>
      <path d="M7 .7h10v10H7zM7 6H1v11h10v-6" strokeWidth="1.200" />
      <path d="M10 8V6M12.200 8V3.500M14.400 8V5M3.500 14v-1.500M5.700 14v-2.500M7.900 14v-2" strokeWidth="1.200" />
    </I>
  ),
  clear: (
    <I w={20} h={18}>
      <path d="M9 15.300H.7V.7h14.600V8" /><BarsIn />
      <path d="M12 10.500l6.500 6.500M18.500 10.500l-6.500 6.500" stroke="#1c1c1c" strokeWidth="2.200" />
    </I>
  ),
  swap: (
    <I w={18} h={18}>
      <path d="M1 1.500h3v3H1zM6.500 1.500h3v3h-3zM12 1.500h2.500v3H12zM1 7h3v3H1zM1 12.500h3v3H1z" strokeWidth="1.200" />
      <path d="M16 7.500c0 4-2 7-7 7.500M13.500 9.500l2.500-2.500 2 2.500M11.500 12.500l-2.500 2.500 2.500 2" />
    </I>
  ),
  asc: (
    <I w={18} h={16}>
      <path d="M3.500 1v13M1 11l2.500 3L6 11" />
      <path d="M9 1.500h3v3H9zM9 6.500h6v3H9zM9 11.500h8v3H9z" strokeWidth="1.200" />
    </I>
  ),
  desc: (
    <I w={18} h={16}>
      <path d="M3.500 1v13M1 11l2.500 3L6 11" />
      <path d="M9 1.500h8v3H9zM9 6.500h6v3H9zM9 11.500h3v3H9z" strokeWidth="1.200" />
    </I>
  ),
  highlight: (
    <I w={14} h={20}>
      <path d="M8.500 1.500l3 1.800-5 10-3.500 1.500.5-3.800z" />
      <path d="M1 18h12" strokeWidth="2.200" />
    </I>
  ),
  clip: <I w={14} h={18}><path d="M10.500 5L5.500 13c-.8 1.500-2.500.500-1.800-.8L9 3c1.300-2.300 4.500-.5 3.200 1.800l-5.700 9.700c-2 3.500-6.300 1-4.500-2.200L6.500 5" strokeWidth="1.300" /></I>,
  text: (
    <I w={18} h={18}>
      <path d="M1 1h16v16H1z" strokeDasharray="2 1.500" />
      <path d="M5.500 7V5.500h7V7M9 5.500v8M7.500 13.500h3" strokeWidth="1.300" />
    </I>
  ),
  pin: <I w={14} h={18}><path d="M5.500 1.500l7 3-1.500 1-1.500 4.500.5 3L3 10l2.500-1.500L7 4zM5.500 12l-2 5" strokeWidth="1.300" /></I>,
  fit: (
    <I w={22} h={16}>
      <path d="M1 1.500h3v3H1zM1 6.500h3v3H1zM1 11.500h3v3H1zM7 1.500h13.500v13H7z" strokeWidth="1.300" />
      <path d="M10.500 12.500v-3.500M13.700 12.500v-8M17 12.500v-6" strokeWidth="1.800" />
    </I>
  ),
  present: (
    <I w={18} h={18}>
      <path d="M0 2.500h18" strokeWidth="2" /><path d="M2 3v8.500h14V3M9 11.500V17M5.500 17h7M9 0v2" />
    </I>
  ),
  share: (
    <I w={16} h={18}>
      <circle cx="3.500" cy="9" r="2.600" /><circle cx="12" cy="3.500" r="2.600" /><circle cx="12" cy="14.500" r="2.600" />
      <path d="M5.700 7.500l4-2.700M5.700 10.500l4 2.700" />
    </I>
  ),
};

/* ---------- toolbar ---------- */

const Tool = ({ name, w, label, dim }) => (
  <button type="button" aria-label={label} className={`flex h-8 shrink-0 items-center justify-center ${w} ${dim ? "text-[#b9b9b9]" : "text-[#5c5c5c]"}`}>
    {TOOL[name]}
  </button>
);

const Drop = ({ w, label, dim }) => (
  <button type="button" aria-label={label} className={`flex h-8 shrink-0 items-center justify-center ${w} ${dim ? "text-[#bdbdbd]" : "text-[#5c5c5c]"}`}>
    <Caret />
  </button>
);

const Group = ({ className, children }) => (
  <div className={`flex h-9 shrink-0 items-center border-l border-[#cfcfcf] ${className}`}>{children}</div>
);

function Toolbar() {
  return (
    <div role="toolbar" className="flex h-[41px] shrink-0 items-center border-t border-[#ececec] bg-[#f4f4f4]">
      <button type="button" aria-label="Start page" className="flex w-[47px] shrink-0 justify-center"><TableauMark /></button>
      <Group className="px-[6px]">
        <Tool name="back" w="w-8" label="Undo" />
        <Tool name="forward" w="w-8" label="Redo" />
        <Tool name="save" w="w-8" label="Save" />
        <Tool name="addData" w="w-8" label="New data source" />
        <Tool name="pauseData" w="w-7" label="Pause auto updates" />
        <Drop w="w-3" label="Pause options" />
        <Tool name="refresh" w="w-7" label="Run update" dim />
        <Drop w="w-3" label="Update options" dim />
      </Group>
      <Group className="px-[6px]">
        <Tool name="newSheet" w="w-8" label="New worksheet" />
        <Drop w="w-2" label="New worksheet options" />
        <Tool name="duplicate" w="w-8" label="Duplicate sheet" />
        <Tool name="clear" w="w-8" label="Clear sheet" />
        <Drop w="w-2" label="Clear options" />
      </Group>
      <Group className="px-2">
        <Tool name="swap" w="w-8" label="Swap rows and columns" dim />
        <Tool name="asc" w="w-8" label="Sort ascending" dim />
        <Tool name="desc" w="w-8" label="Sort descending" dim />
      </Group>
      <Group className="pl-3 pr-[14px]">
        <Tool name="highlight" w="w-5" label="Highlight" />
        <Drop w="w-3" label="Highlight options" />
        <Tool name="clip" w="w-7" label="Group members" dim />
        <Drop w="w-3" label="Group options" dim />
        <Tool name="text" w="w-8" label="Show mark labels" dim />
        <Tool name="pin" w="w-7" label="Fix axes" dim />
        <div className="relative ml-3 text-[#c4c4c4]">
          <select aria-label="Fit" className="block h-[23px] w-[104px] appearance-none rounded-sm border border-[#d2d2d2] bg-transparent" />
          <span className="pointer-events-none absolute right-[6px] top-[6px]"><Caret /></span>
        </div>
      </Group>
      <Group className="px-2">
        <Tool name="fit" w="w-8" label="Show cards" />
        <Drop w="w-2" label="Card options" />
        <Tool name="present" w="w-8" label="Presentation mode" />
      </Group>
      <Group className="pl-[6px]">
        <Tool name="share" w="w-8" label="Share" />
      </Group>
      <button type="button" className="ml-auto mr-7 flex items-center gap-[6px] text-[13px] text-[#222]">
        <svg width="14" height="15" viewBox="0 0 14 15" aria-hidden="true">
          <path d="M0 0h11v3H0z" fill="#8a7088" /><path d="M0 4h14v3H0z" fill="#82a7d0" />
          <path d="M0 8h5v3H0z" fill="#f2a97c" /><path d="M0 12h8v3H0z" fill="#f96f86" />
        </svg>
        Show Me
      </button>
    </div>
  );
}

/* ---------- side pane ---------- */

const Stepper = ({ id, label }) => (
  <div className="w-[69px]">
    <label htmlFor={id} className="block h-[14px] text-[11px] leading-3 text-[#a5a5a5]">{label}</label>
    <div className="flex h-[25px] rounded-sm border border-[#d4d4d4]">
      <input id={id} type="text" className="w-12 min-w-0 flex-1 bg-transparent px-1 text-xs" />
      <div className="flex w-[19px] flex-col border-l border-[#ececec] text-[#bdbdbd]">
        <button type="button" aria-label={`Increase ${label}`} className="flex flex-1 rotate-180 items-center justify-center border-t border-[#ececec]"><Caret /></button>
        <button type="button" aria-label={`Decrease ${label}`} className="flex flex-1 items-center justify-center"><Caret /></button>
      </div>
    </div>
  </div>
);

const Check = ({ id, label }) => (
  <div className="flex h-[26px] items-center gap-[5px]">
    <input id={id} type="checkbox" className="size-[15px] appearance-none rounded-[1px] border border-[#d0d0d0] bg-white" />
    <label htmlFor={id} className="text-[12px] text-[#adadad]">{label}</label>
  </div>
);

const TREE = [
  ["Tiled", "tiled", "pl-[18px]", true],
  ["Map", "sheet", "pl-[38px]", false],
  ["Vertical", "vertical", "pl-[38px]", true],
  ["Horizontal", "horizontal", "pl-[58px]", true],
  ["Click to View Profit by", "text", "pl-[78px]", false],
  ["Show/Hide", "button", "pl-[78px]", false],
  ["Scatter Plot", "sheet", "pl-[58px]", false],
  ["Time", "sheet", "pl-[58px]", false],
];

function SidePane() {
  return (
    <aside className="flex w-[313px] shrink-0 flex-col border-r border-t border-[#cfcfcf] bg-[#fafafa]">
      <div role="tablist" className="flex h-[26px] shrink-0 text-[13px] text-[#222]">
        <button type="button" role="tab" aria-selected="false" className="w-[178px] border-b border-r border-[#d4d4d4] pl-[18px] text-left">Dashboard</button>
        <button type="button" role="tab" aria-selected="true" className="flex-1 pl-[11px] text-left font-bold text-black">Layout</button>
        <button type="button" aria-label="Collapse pane" className="w-5 text-[#555]">
          <I w={8} h={11} className="mx-auto"><path d="M6 1L1.500 5.500 6 10" /></I>
        </button>
      </div>
      <div className="relative h-[182px] overflow-hidden border-b border-[#cfcfcf] pl-[18px] pt-[10px]">
        <h2 className="text-[13px] font-semibold leading-[18px] text-[#333]">Selected item</h2>
        <p className="mb-1 text-[13px] leading-4 text-[#555]">Dashboard 1</p>
        <Check id="show-title" label="Show title" />
        <Check id="floating" label="Floating" />
        <p className="mt-[14px] text-[11px] leading-4 text-[#8a8a8a]">Position</p>
        <div className="flex gap-[9px]">
          <Stepper id="pos-x" label="x" />
          <Stepper id="pos-y" label="y" />
        </div>
        <p className="mt-1 text-[11px] leading-4 text-[#8a8a8a]">Size</p>
        <div className="absolute inset-y-0 right-0 w-[10px] bg-[#f2f2f2]"><div className="h-[61px] bg-[#dedede]" /></div>
      </div>
      <div className="pt-3">
        <h2 className="pl-[18px] text-[13px] font-semibold leading-5 text-[#333]">Item hierarchy</h2>
        <p className="mb-[3px] pl-[18px] text-[13px] leading-[18px] text-[#555]">Dashboard 1</p>
        <ul className="text-[12px] text-[#444]">
          {TREE.map(([name, icon, indent, open]) => (
            <li key={name} className={`flex h-6 items-center ${indent}`}>
              <span className="flex w-[29px] pl-[5px]">{open ? <Chevron /> : null}</span>
              <span className="text-[#666]">{HIER[icon]}</span>
              <span className="pl-[10px]">{name}</span>
            </li>
          ))}
        </ul>
      </div>
    </aside>
  );
}

/* ---------- footer ---------- */

const AddSheet = ({ label, children }) => (
  <button type="button" aria-label={label} className="flex w-8 items-center justify-center border-r border-[#c9c9c9] text-[#666]">
    <I w={16} h={16}>{children}<path d={plus(11.500, 11.500, 3.500)} strokeWidth="2.200" /></I>
  </button>
);

const Nav = ({ label, d }) => (
  <button type="button" aria-label={label} className="flex w-4 items-center justify-center text-[#b0b0b0]">
    <svg width="7" height="8" viewBox="0 0 7 8" fill="currentColor" aria-hidden="true"><path d={d} /></svg>
  </button>
);

function Footer() {
  return (
    <footer className="shrink-0">
      <div className="flex h-[31px] border-y border-[#c9c9c9] bg-[#e6e6e6] text-[12px] text-[#666]">
        <button type="button" className="flex w-[131px] items-center gap-[6px] border-r border-[#c9c9c9] pl-[9px]">
          <I w={9} h={13}><path d="M1 2.500v8c0 1 1.500 1.700 3.500 1.700S8 11.500 8 10.500v-8M1 2.500C1 1.500 2.500.8 4.500.8S8 1.500 8 2.500 6.500 4.200 4.500 4.200 1 3.500 1 2.500z" strokeWidth="1.200" /></I>
          Data Source
        </button>
        <button type="button" className="flex w-[103px] items-center gap-1 whitespace-nowrap border-r border-[#c9c9c9] bg-[#fcfcfc] pl-2 font-semibold text-[#444]">
          <I w={12} h={12}><path d="M.7.7h10.600v10.600H.7zM6 .7v10.600M.7 6h10.600" strokeWidth="1.200" /></I>
          Dashboard 1
        </button>
        <button type="button" className="w-[38px] border-r border-[#c9c9c9]">Map</button>
        <button type="button" className="w-[82px] whitespace-nowrap border-r border-[#c9c9c9]">Scatter Plot</button>
        <button type="button" className="w-[42px] border-r border-[#c9c9c9]">Time</button>
        <AddSheet label="New worksheet"><path d="M7 11.300H.7V.7h10.600V7M4 8.500V6M6 8.500v-4M8 8.500V5.500" strokeWidth="1.200" /></AddSheet>
        <AddSheet label="New dashboard"><path d="M7 11.300H.7V.7h10.600V7M6 .7v10.600M.7 6h10.600" strokeWidth="1.200" /></AddSheet>
        <AddSheet label="New story"><path d="M6 12L.7 11V.7L6 2.500 11.300.7V7M6 2.500V12" strokeWidth="1.200" /></AddSheet>
      </div>
      <div className="flex h-[18px] justify-end bg-[#ebebeb]">
        <div className="w-32 border-l border-[#c9c9c9]" />
        <div className="w-[27px] border-l border-[#c9c9c9]" />
        <div className="w-[27px] border-l border-[#c9c9c9]" />
        <div className="w-12 border-l border-[#c9c9c9]" />
        <div className="flex w-[71px] border-l border-[#c9c9c9] pl-[2px]">
          <Nav label="First sheet" d="M0 0h1.500v8H0zM6.500 0v8L2.500 4z" />
          <Nav label="Previous sheet" d="M5 0v8L1 4z" />
          <Nav label="Next sheet" d="M2 0v8l4-4z" />
          <Nav label="Last sheet" d="M5.500 0H7v8H5.500zM.5 0v8l4-4z" />
        </div>
        <div className="flex w-[67px] items-center justify-between border-l border-[#c9c9c9] px-[7px]">
          <button type="button" aria-label="Sheet sorter">
            <svg width="11" height="11" viewBox="0 0 11 11" fill="#b4b4b4" className="block" aria-hidden="true"><path d="M0 0h3v3H0zM4 0h3v3H4zM8 0h3v3H8zM0 4h3v3H0zM4 4h3v3H4zM8 4h3v3H8zM0 8h3v3H0zM4 8h3v3H4zM8 8h3v3H8z" /></svg>
          </button>
          <button type="button" aria-label="Filmstrip">
            <svg width="11" height="11" viewBox="0 0 11 11" fill="#b4b4b4" className="block" aria-hidden="true"><path d="M0 0h11v7H0zM0 8h3v3H0zM4 8h3v3H4zM8 8h3v3H8z" /></svg>
          </button>
          <button type="button" aria-label="Sheet tabs"><span className="block size-[11px] bg-[#5a5a5a]" /></button>
        </div>
      </div>
      <div className="h-[2px] bg-[#444]" />
    </footer>
  );
}

/* ---------- page ---------- */

const MENUS = ["File", "Data", "Worksheet", "Dashboard", "Story", "Analysis", "Map", "Format", "Server", "Window", "Help"];

export default function App() {
  return (
    <div className="relative flex min-h-screen flex-col overflow-hidden bg-[#fefefd] font-['Noto_Sans','Open_Sans',sans-serif]">
      <header className="shrink-0">
        <div className="flex h-6 items-center pl-[2px] text-[#8b8b8b]">
          <span className="mr-[6px] border-b border-r border-[#c4c4c4]"><svg width="14" height="15" viewBox="0 0 18 18" aria-hidden="true"><TableauMark mono /></svg></span>
          <h1 className="whitespace-pre text-[11px]">{"Tableau - Show Hide  Button"}</h1>
          <div className="ml-auto mr-[3px] flex text-[#8f8f8f]">
            <button type="button" aria-label="Minimise" className="flex w-[45px] justify-center"><I w={11} h={11}><path d="M0 5.500h11" strokeWidth="1" /></I></button>
            <button type="button" aria-label="Restore" className="flex w-[45px] justify-center"><I w={11} h={11}><path d="M.5 2.500h8v8h-8zM2.500 2.500v-2h8v8h-2" strokeWidth="1" /></I></button>
            <button type="button" aria-label="Close" className="flex w-[45px] justify-center"><I w={11} h={11}><path d="M.5.5l10 10M10.500.5l-10 10" strokeWidth="1" /></I></button>
          </div>
        </div>
        <nav className="flex h-[19px] items-center gap-4 pl-2 text-[11px] text-[#8b8b8b]">
          {MENUS.map((m) => <button type="button" key={m}>{m}</button>)}
        </nav>
      </header>
      <Toolbar />
      <div className="flex flex-1">
        <SidePane />
        <main className="min-w-0 flex-1 bg-[#f4f4f4] pr-[107px]">
          <div className="grid grid-cols-[946fr_554fr] bg-[#fefefd]">
            <section className="pb-[5px] pl-1 pr-[2px]">
              <h2 className="h-[47px] pl-1 text-[20px] font-medium leading-[47px] text-[#333]">Profit Ratio by Province</h2>
              <div className="border border-[#e2e2e2]"><ProfitMap /></div>
            </section>
            <section>
              <div className="flex h-[62px] items-start gap-[3px] pt-1">
                <p className="w-[180px] text-center text-[15px] leading-5 text-[#444]">
                  Click to View
                  <span className="block text-[20px] font-medium leading-7 text-[#2e2e2e]">Profit by</span>
                </p>
                <button type="button" className="h-[49px] w-[156px] border border-[#777] bg-[#323232] text-[15px] font-bold text-white">Customers</button>
              </div>
              <h2 className="h-9 pl-[10px] text-[21px] font-light leading-9 text-[#333]">Profitable Customers</h2>
              <ScatterPlot />
              <h2 className="h-9 pl-[10px] text-[21px] font-light leading-9 text-[#333]">Profit by Quarter</h2>
              <LineChart />
            </section>
          </div>
        </main>
      </div>
      <Footer />
      <svg width="17" height="29" viewBox="0 0 17 29" className="pointer-events-none absolute left-[166px] top-[549px]" aria-hidden="true">
        <path d="M1 1v20l4.500-4.500L10 27l3-1-4.500-10.500H15z" fill="#050510" />
      </svg>
    </div>
  );
}
